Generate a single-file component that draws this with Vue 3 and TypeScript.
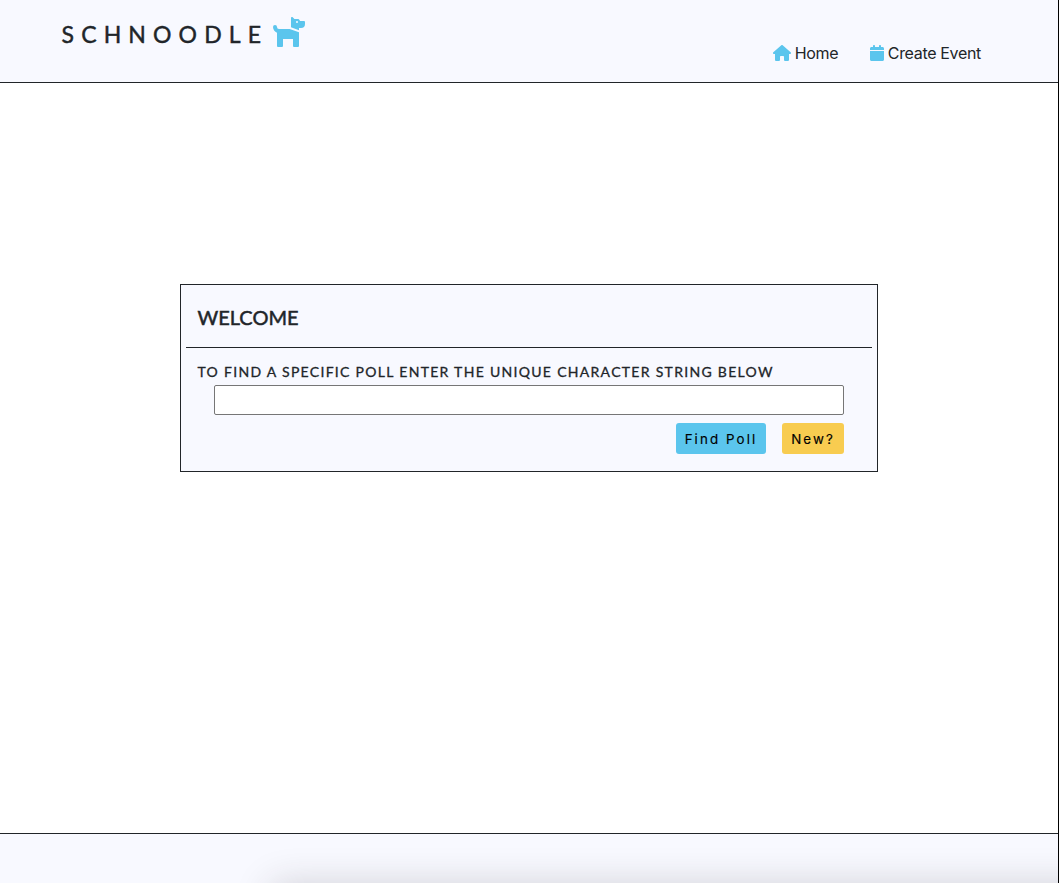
<script setup lang="ts">
import { ref } from 'vue'

interface NavItem {
  label: string
  viewBox: string
  width: number
  path: string
}

const pollId = ref('')

const navItems: NavItem[] = [
  {
    label: 'Home',
    viewBox: '0 0 576 512',
    width: 18,
    path: 'M575.8 255.5c0 18-15 32.1-32 32.1h-32l.7 160.2c0 2.7-.2 5.4-.5 8.1V472c0 22.1-17.9 40-40 40H456c-1.1 0-2.2 0-3.3-.1c-1.4 .1-2.8 .1-4.2 .1H416 392c-22.1 0-40-17.9-40-40V448 384c0-17.7-14.3-32-32-32H256c-17.7 0-32 14.3-32 32v64 24c0 22.1-17.9 40-40 40H160 128.1c-1.5 0-3-.1-4.5-.2c-1.2 .1-2.4 .2-3.6 .2H104c-22.1 0-40-17.9-40-40V360c0-.9 0-1.9 .1-2.8V287.6H32c-18 0-32-14-32-32.1c0-9 3-17 10-24L266.4 8c7-7 15-8 22-8s15 2 21 7L564.8 231.5c8 7 12 15 11 24z',
  },
  {
    label: 'Create Event',
    viewBox: '0 0 448 512',
    width: 14,
    path: 'M96 32V64H48C21.5 64 0 85.5 0 112v48H448V112c0-26.5-21.5-48-48-48H352V32c0-17.7-14.3-32-32-32s-32 14.3-32 32V64H160V32c0-17.7-14.3-32-32-32S96 14.3 96 32zM448 192H0V464c0 26.5 21.5 48 48 48H400c26.5 0 48-21.5 48-48V192z',
  },
]
</script>

<template>
  <div class="page">
    <header class="header">
      <div class="brand">
        <span class="wordmark">SCHNOODLE</span>
        <svg class="dog" viewBox="0 0 576 512" width="36" height="32">
          <path d="M298.06,224,448,277.55V496a16,16,0,0,1-16,16H368a16,16,0,0,1-16-16V384H192V496a16,16,0,0,1-16,16H112a16,16,0,0,1-16-16V282.09C58.84,268.84,32,233.66,32,192a32,32,0,0,1,64,0,32.06,32.06,0,0,0,32,32ZM544,112v32a64,64,0,0,1-64,64H448v35.58L320,197.87V48c0-14.25,17.22-21.39,27.31-11.31L374.59,64h53.63c10.91,0,23.75,7.92,28.62,17.69L464,96h64A16,16,0,0,1,544,112Zm-112,0a16,16,0,1,0-16,16A16,16,0,0,0,432,112Z" />
        </svg>
      </div>
      <nav class="nav">
        <a v-for="item in navItems" :key="item.label" class="link">
          <svg :viewBox="item.viewBox" :width="item.width" height="16"><path :d="item.path" /></svg>
          <span>{{ item.label }}</span>
        </a>
      </nav>
    </header>
    <main class="main">
      <section class="card">
        <h1 class="title">WELCOME</h1>
        <form class="form" @submit.prevent>
          <label class="prompt" for="poll">TO FIND A SPECIFIC POLL ENTER THE UNIQUE CHARACTER STRING BELOW</label>
          <input id="poll" v-model="pollId" class="field" type="text" />
          <div class="actions">
            <button class="btn find" type="submit">Find Poll</button>
            <button class="btn new" type="button">New?</button>
          </div>
        </form>
      </section>
    </main>
    <footer class="footer"></footer>
  </div>
</template>

<style>
body {
  margin: 0;
  overflow: hidden;
}
</style>

<style scoped>
* {
  box-sizing: border-box;
}
.page {
  display: flex;
  flex-direction: column;
  width: 100%;
  height: 883px;
  border-right: 1px solid #000;
  background: #fff;
  color: #212529;
  font-family: Inter, "Liberation Sans", sans-serif;
}
.header {
  display: flex;
  justify-content: space-between;
  height: 83px;
  padding: 15px 77px 0 61px;
  border-bottom: 1px solid #212529;
  background: #f8f9ff;
}
.brand {
  display: flex;
  align-items: flex-start;
  height: 40px;
}
.wordmark {
  width: 210px;
  padding-left: 0.5px;
  font: 400 23px/38px Lato, sans-serif;
  letter-spacing: 7.15px;
  white-space: nowrap;
  -webkit-text-stroke: 0.45px #212529;
}
.dog {
  fill: #5bc5ed;
}
.nav {
  display: flex;
  gap: 31.5px;
  height: 24px;
  margin-top: 26px;
}
.link {
  display: flex;
  align-items: center;
  gap: 4px;
  font-size: 16px;
  line-height: 24px;
  letter-spacing: -0.33px;
  white-space: nowrap;
}
.link svg {
  fill: #5bc5ed;
}
.main {
  flex: 1;
  padding-top: 201px;
}
.card {
  width: 698px;
  height: 188px;
  margin-left: 180px;
  padding: 0 5px;
  border: 1px solid #212529;
  background: #f8f9ff;
}
.title {
  height: 63px;
  margin: 0;
  padding-left: 11.5px;
  border-bottom: 1px solid #212529;
  font: 400 20px/64px Lato, sans-serif;
  letter-spacing: 0;
  -webkit-text-stroke: 0.5px #212529;
}
.form {
  display: flex;
  flex-direction: column;
  padding: 13px 28px 0;
}
.prompt {
  height: 24px;
  margin-left: -16.5px;
  font: 400 14px/22px Lato, sans-serif;
  letter-spacing: 1.3px;
  white-space: nowrap;
  -webkit-text-stroke: 0.3px #212529;
}
.field {
  height: 30px;
  margin: 0;
  border: 1px solid #767676;
  border-radius: 2px;
  background: #fff;
  outline: none;
}
.actions {
  display: flex;
  justify-content: flex-end;
  gap: 16px;
  margin-top: 8px;
}
.btn {
  height: 31px;
  padding: 2px 0 0;
  border: 0;
  border-radius: 3px;
  color: #000;
  font: 400 13.333px/29px Inter, sans-serif;
  letter-spacing: 2.1px;
  white-space: nowrap;
  -webkit-text-stroke: 0.15px #000;
}
.find {
  width: 90px;
  background: #5bc5ed;
}
.new {
  width: 62px;
  background: #f8cc50;
}
.footer {
  position: relative;
  height: 50px;
  overflow: hidden;
  border-top: 1px solid #212529;
  background: #f8f9ff;
}
.footer::after {
  position: absolute;
  top: 54px;
  right: -60px;
  left: 275px;
  height: 40px;
  box-shadow: 0 0 38px 3px rgba(45, 35, 40, 0.2);
  content: "";
}
</style>
